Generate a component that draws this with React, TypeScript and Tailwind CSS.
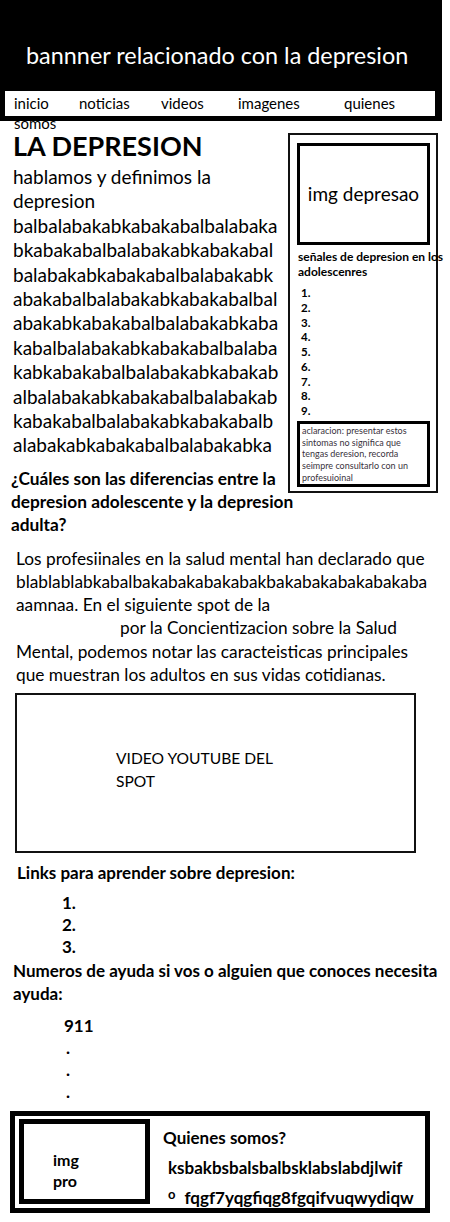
export default function App() {
  const blabla = [
    "balbalabakabkabakabalbalabaka",
    "bkabakabalbalabakabkabakabal",
    "balabakabkabakabalbalabakabk",
    "abakabalbalabakabkabakabalbal",
    "abakabkabakabalbalabakabkaba",
    "kabalbalabakabkabakabalbalaba",
    "kabkabakabalbalabakabkabakab",
    "albalabakabkabakabalbalabakab",
    "kabakabalbalabakabkabakabalb",
    "alabakabkabakabalbalabakabka",
  ];
  const nota = [
    "aclaracion: presentar estos",
    "sintomas no significa que",
    "tengas deresion, recorda",
    "seimpre consultarlo con un",
    "profesuioinal",
  ];

  return (
    <div className="w-[450px] min-h-[1222px] bg-white text-black font-[Lato,sans-serif]">
      {/* banner */}
      <div className="w-[442px] h-[121px] bg-black pt-[41px]">
        <h1 className="pl-[26px] text-[23.4px] leading-[28px] text-white">
          bannner relacionado con la depresion
        </h1>
        <nav className="mt-[22px] ml-[5px] w-[430px] h-[25px] bg-white pl-[9px] pt-[2px] flex flex-wrap text-[15px] leading-[20px]">
          <span className="w-[65px]">inicio</span>
          <span className="w-[82px]">noticias</span>
          <span className="w-[77px]">videos</span>
          <span className="w-[106px]">imagenes</span>
          <span className="mr-[4px]">quienes</span>
          <span>somos</span>
        </nav>
      </div>

      {/* contenido + barra lateral */}
      <div className="flex items-start">
        <div className="w-[288px] shrink-0 pl-[13px] pt-[9px]">
          <h2 className="text-[27px] leading-[32px] font-bold">LA DEPRESION</h2>
          <div className="mt-[3px] text-[19px] leading-[24.4px]">
            <p>hablamos y definimos la</p>
            <p>depresion</p>
            {blabla.map((line, i) => (
              <p key={i}>{line}</p>
            ))}
          </div>
          <h3 className="mt-[9px] -ml-[2px] w-[295px] text-[17.3px] leading-[23px] font-bold whitespace-nowrap">
            <p>¿Cuáles son las diferencias entre la</p>
            <p>depresion adolescente y la depresion</p>
            <p>adulta?</p>
          </h3>
        </div>

        <aside className="mt-[12px] w-[150px] h-[360px] shrink-0 border-2 border-[#111]">
          <div className="mt-[8px] ml-[7px] w-[133px] h-[102px] border-[3px] border-black flex items-center justify-center text-[19px]">
            img depresao
          </div>
          <p className="mt-[4px] ml-[8px] w-[160px] text-[12px] leading-[15px] font-bold">
            señales de depresion en los adolescenres
          </p>
          <ol className="mt-[7px] ml-[11px] text-[11.5px] leading-[14.75px] font-bold">
            {[1, 2, 3, 4, 5, 6, 7, 8, 9].map((n) => (
              <li key={n}>{n}.</li>
            ))}
          </ol>
          <div className="mt-[2px] ml-[7px] w-[133px] h-[66px] border-[3px] border-black pl-[2px] pt-[1px] text-[9px] leading-[11.8px] text-[#3a3340]">
            {nota.map((l, i) => (
              <p key={i}>{l}</p>
            ))}
          </div>
        </aside>
      </div>

      {/* parrafo */}
      <div className="mt-[11px] pl-[16px] text-[17.3px] leading-[23.2px] whitespace-nowrap">
        <p>Los profesiinales en la salud mental han declarado que</p>
        <p>blablablabkabalbakabakabakabakbakabakabakabakaba</p>
        <p>aamnaa. En el siguiente spot de la</p>
        <p className="pl-[104px]">por la Concientizacion sobre la Salud</p>
        <p>Mental, podemos notar las caracteisticas principales</p>
        <p>que muestran los adultos en sus vidas cotidianas.</p>
      </div>

      {/* video */}
      <div className="mt-[7px] ml-[15px] w-[401px] h-[160px] border-2 border-[#111] pt-[52px] pl-[99px] text-[15.6px] leading-[22.5px]">
        <p>VIDEO YOUTUBE DEL</p>
        <p>SPOT</p>
      </div>

      {/* links */}
      <div className="mt-[9px] font-bold text-[17px] leading-[22px]">
        <p className="pl-[17px]">Links para aprender sobre depresion:</p>
        <ol className="mt-[8px] pl-[62px]">
          <li>1.</li>
          <li>2.</li>
          <li>3.</li>
        </ol>
        <p className="mt-[1px] pl-[13px] leading-[23px]">
          Numeros de ayuda si vos o alguien que conoces necesita
          <br />
          ayuda:
        </p>
        <ul className="mt-[10px] pl-[64px]">
          <li>911</li>
          <li className="pl-[2px]">.</li>
          <li className="pl-[2px]">.</li>
          <li className="pl-[2px]">.</li>
        </ul>
      </div>

      {/* quienes somos */}
      <div className="mt-[8px] ml-[10px] w-[420px] h-[102px] border-[5px] border-black flex items-start pt-[3px] pl-[4px]">
        <div className="w-[131px] h-[85px] shrink-0 border-[5px] border-black pl-[29px] pt-[25px] font-bold text-[16px] leading-[21px]">
          <p>img</p>
          <p>pro</p>
        </div>
        <div className="ml-[13px] font-bold text-[17px] leading-[22px]">
          <p className="mt-[8px]">Quienes somos?</p>
          <p className="mt-[8px] pl-[5px]">ksbakbsbalsbalbsklabslabdjlwif</p>
          <p className="mt-[8px] pl-[5px] flex items-start">
            <span className="text-[13px] leading-[14px]">o</span>
            <span className="ml-[9px]">fqgf7yqgfiqg8fgqifvuqwydiqw</span>
          </p>
        </div>
      </div>
    </div>
  );
}
